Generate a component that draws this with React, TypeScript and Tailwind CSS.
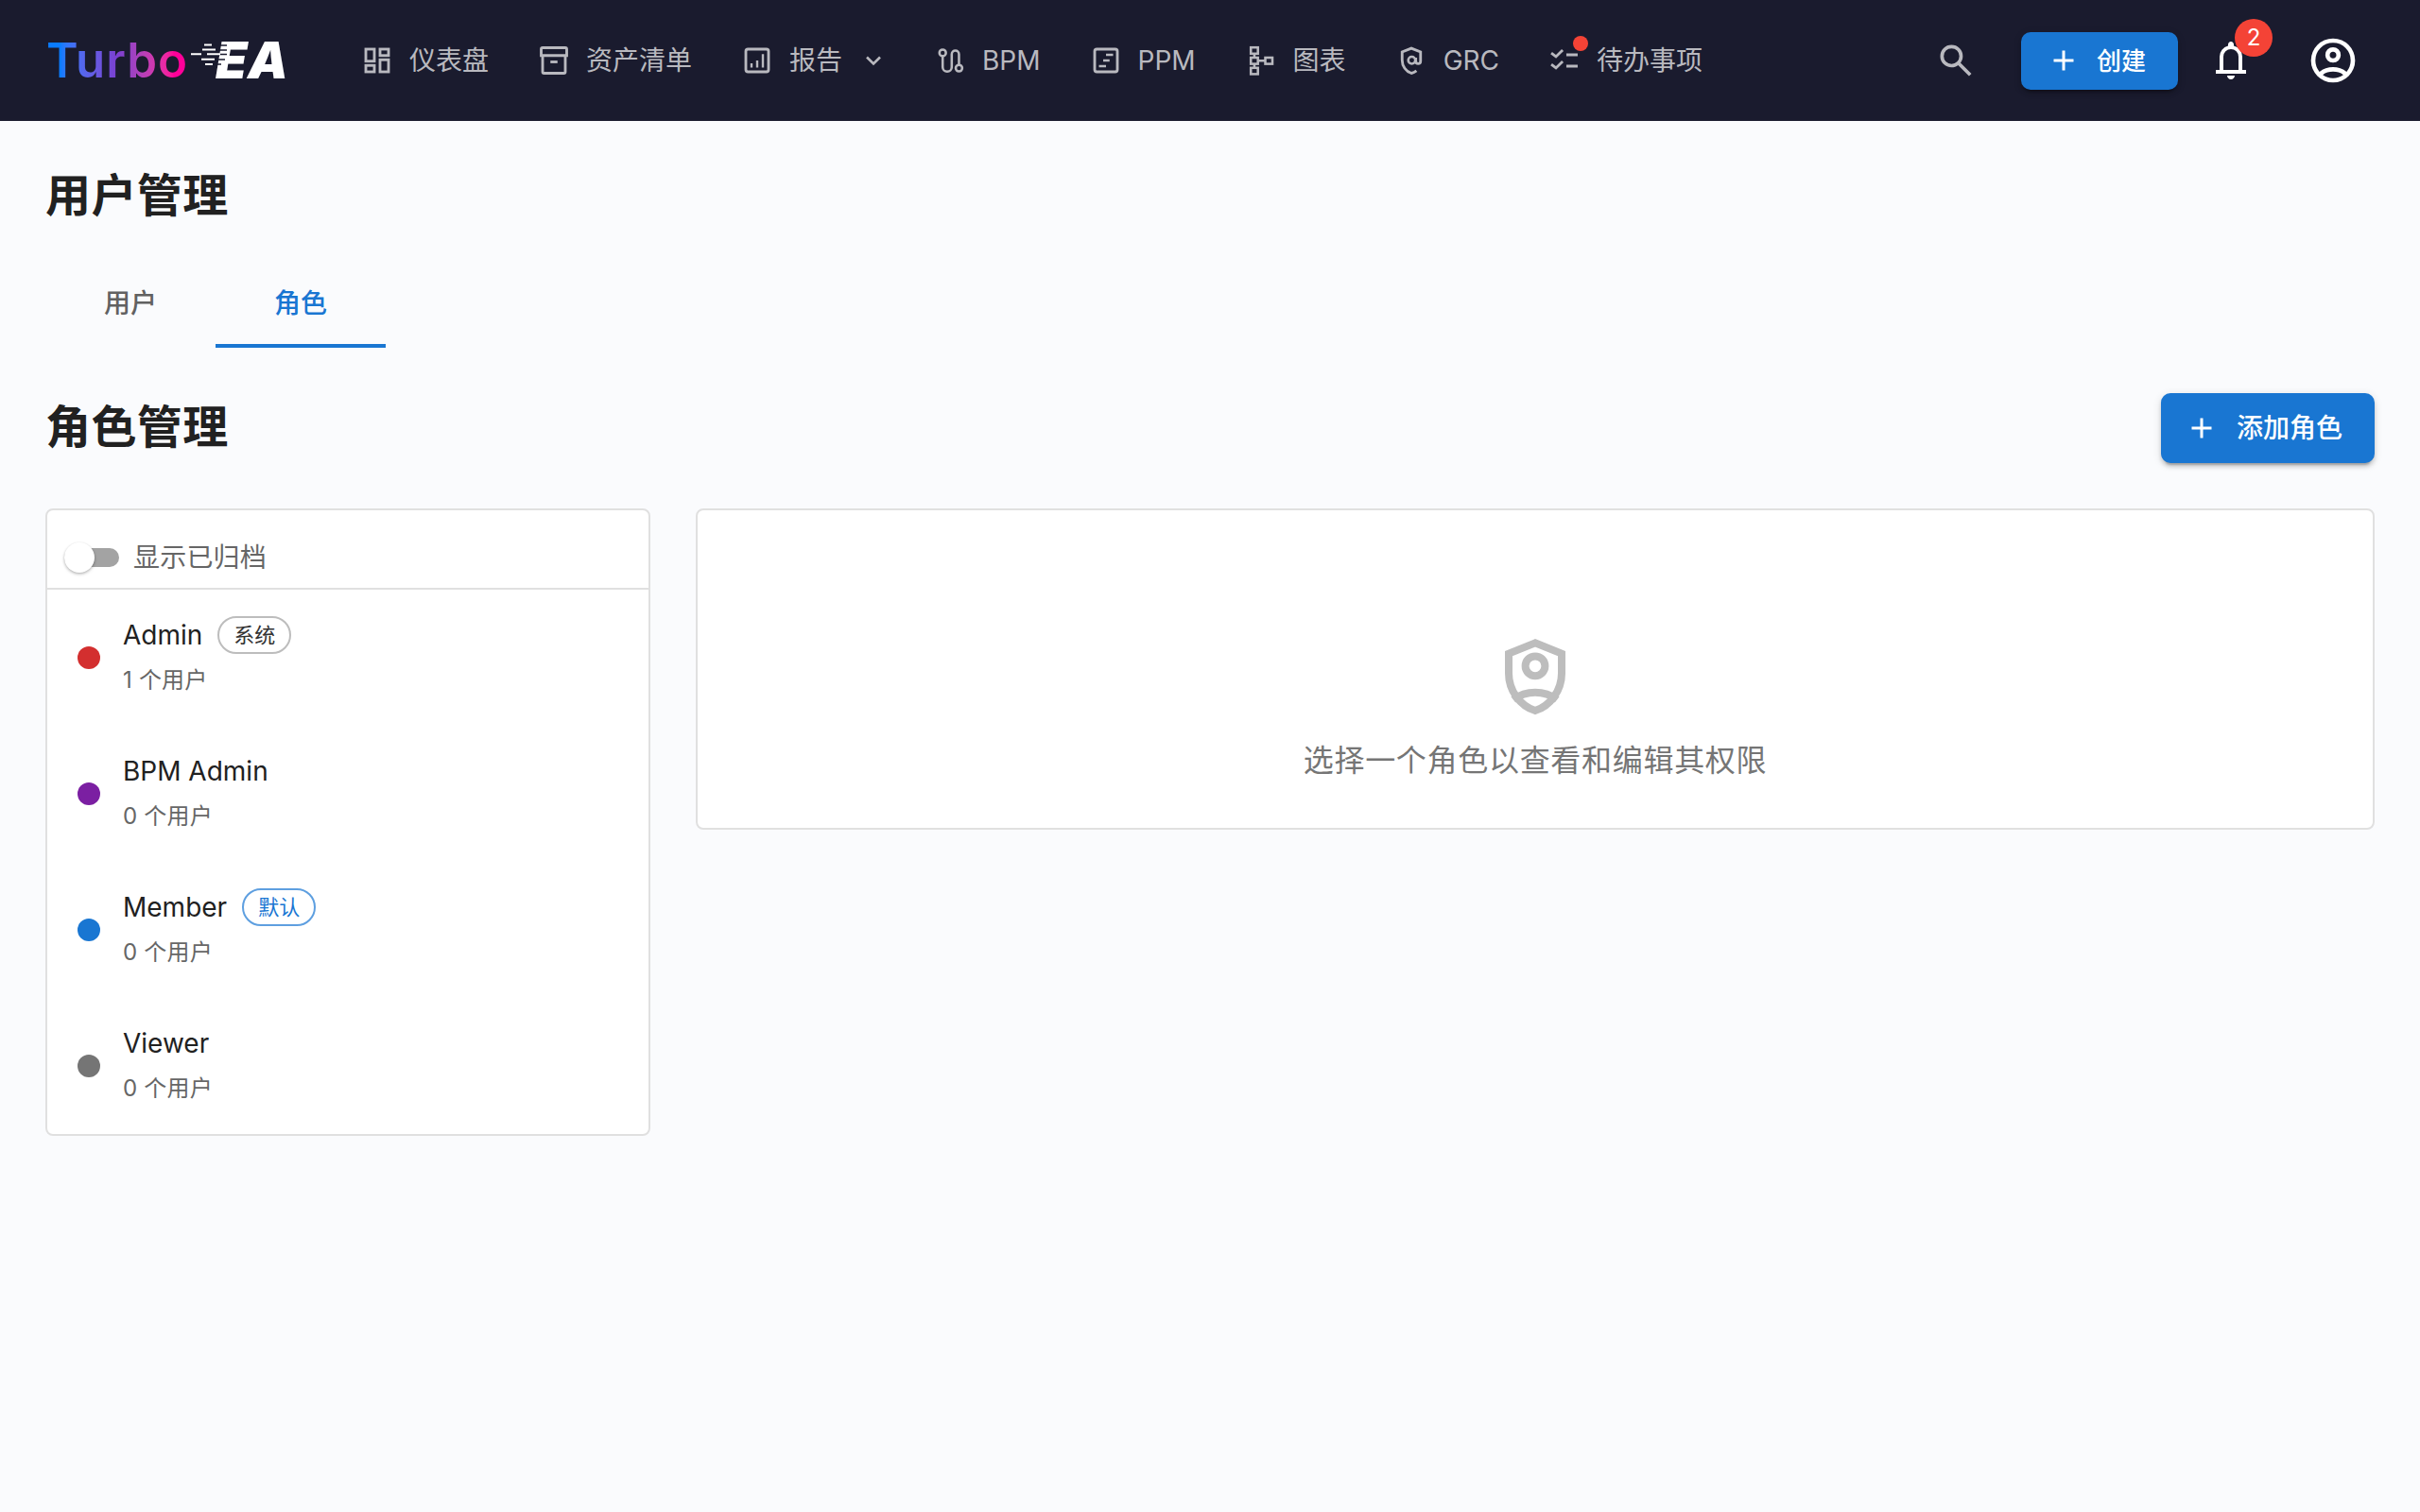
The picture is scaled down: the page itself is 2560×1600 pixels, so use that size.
import type { ReactNode } from "react";

const Icon = ({ children, className = "w-[36px] h-[36px]" }: { children: ReactNode; className?: string }) => (
  <svg viewBox="0 0 24 24" fill="none" stroke="currentColor" strokeWidth={1.9} className={`${className} shrink-0`}>
    {children}
  </svg>
);

const navItems = [
  {
    label: "仪表盘",
    icon: (
      <Icon>
        <rect x="4" y="4" width="6" height="8.5" />
        <rect x="14" y="4" width="6" height="4.5" />
        <rect x="4" y="15.5" width="6" height="4.5" />
        <rect x="14" y="11.5" width="6" height="8.5" />
      </Icon>
    ),
  },
  {
    label: "资产清单",
    icon: (
      <Icon>
        <path d="M4 3h16a1 1 0 0 1 1 1v4.5H3V4a1 1 0 0 1 1-1z" />
        <path d="M4 8.5V20a1 1 0 0 0 1 1h14a1 1 0 0 0 1-1V8.5" />
        <path d="M9.5 13h5" />
      </Icon>
    ),
  },
  {
    label: "报告",
    chevron: true,
    icon: (
      <Icon>
        <rect x="4" y="4" width="16" height="16" rx="1.5" />
        <path d="M8 14v3M12 12v5M16 7.5V17" strokeWidth={1.6} />
      </Icon>
    ),
  },
  {
    label: "BPM",
    icon: (
      <Icon>
        <circle cx="6.8" cy="6.6" r="2.3" strokeWidth={1.7} />
        <circle cx="18.3" cy="17.4" r="2.3" strokeWidth={1.7} />
        <path d="M6.8 9v7.6a3.2 3.2 0 0 0 6.4 0v-9a2.55 2.55 0 0 1 5.1 0V15" strokeWidth={1.7} />
      </Icon>
    ),
  },
  {
    label: "PPM",
    icon: (
      <Icon>
        <rect x="4" y="4" width="16" height="16" rx="1.5" />
        <path d="M12 8h5M10 12h4.5M7 16h5" strokeWidth={1.7} />
      </Icon>
    ),
  },
  {
    label: "图表",
    icon: (
      <Icon>
        <g strokeWidth={1.7}>
          <rect x="4.8" y="2.8" width="5" height="4.4" />
          <rect x="4.8" y="10" width="5" height="4.4" />
          <rect x="4.8" y="17.2" width="5" height="4.4" />
          <rect x="15" y="10" width="5" height="4.4" />
          <path d="M7.3 7.2V10M7.3 14.4v2.8M9.8 12.2H15" />
        </g>
      </Icon>
    ),
  },
  {
    label: "GRC",
    icon: (
      <Icon>
        <path d="M15.6 19.3A8 8 0 0 1 12 21c-3.8-1.2-6.5-5-6.5-9.4V6L12 3.4 18.5 6v6.3c0 2.6-3.4 2.6-3.4 0V10" />
        <circle cx="12.3" cy="11.8" r="2.5" strokeWidth={1.7} />
      </Icon>
    ),
  },
  {
    label: "待办事项",
    dot: true,
    icon: (
      <Icon>
        <path d="M2.7 6.7 6 9.3l4.7-4.6M2.7 14.7 6 17.3l4.7-4.6" />
        <path d="M13.3 8h8M13.3 16h8" />
      </Icon>
    ),
  },
];

const roles = [
  { name: "Admin", color: "bg-[#d32f2f]", users: "1 个用户", chip: "系统", chipClass: "border-[#bdbdbd] text-[#333333]" },
  { name: "BPM Admin", color: "bg-[#7b1fa2]", users: "0 个用户" },
  { name: "Member", color: "bg-[#1976d2]", users: "0 个用户", chip: "默认", chipClass: "border-[#5e9fe0] text-[#1976d2]" },
  { name: "Viewer", color: "bg-[#757575]", users: "0 个用户" },
];

const PlusIcon = () => (
  <svg viewBox="0 0 24 24" fill="currentColor" className="w-[36px] h-[36px] shrink-0">
    <path d="M19 13h-6v6h-2v-6H5v-2h6V5h2v6h6v2z" />
  </svg>
);

function Logo() {
  return (
    <div className="relative w-[333px] shrink-0 h-[60px] flex items-center">
      <span className="ml-[1px] text-[51px] leading-[60px] font-semibold tracking-[1px] bg-gradient-to-r from-[#0a7cff] from-10% via-[#7a3fd0] via-50% to-[#ff0099] to-90% bg-clip-text text-transparent">
        Turbo
      </span>
      <span className="absolute left-[180px] top-[0px] text-[54px] leading-[60px] font-black italic tracking-[0.5px] text-white">
        EA
      </span>
      <svg viewBox="0 0 40 26" className="absolute left-[154px] top-[12px] w-[40px] h-[26px]" fill="none">
        <path d="M12 2h26M12 7h26M20 11.5h18M10 17h26M12 22h20" stroke="#1a1b2e" strokeWidth={1.5} />
        <path d="M14 1.5h8M12 6.5h14M0 11.2h11M17 11.2h14M11 16.8h14M15 22h8" stroke="#ffffff" strokeWidth={2} />
      </svg>
    </div>
  );
}

function Navbar() {
  return (
    <nav className="h-[128px] bg-[#1a1b2e] flex items-center pl-[48px] pr-[64px]">
      <Logo />
      <div className="flex items-center gap-[51px]">
        {navItems.map((item) => (
          <div key={item.label} className="flex items-center gap-[16px] text-[28px] text-[#b9b9bf]">
            <div className="relative">
              {item.icon}
              {item.dot && <span className="absolute left-[27px] top-[-8px] w-[16px] h-[16px] rounded-full bg-[#f44336]" />}
            </div>
            <span className="leading-[40px] whitespace-nowrap">{item.label}</span>
            {item.chevron && (
              <svg viewBox="0 0 30 30" fill="none" stroke="currentColor" strokeWidth={2.6} className="w-[30px] h-[30px] ml-[2px] -mr-[3px]">
                <path d="M8 11.5l7 7 7-7" />
              </svg>
            )}
          </div>
        ))}
      </div>
      <div className="ml-auto flex items-center">
        <svg viewBox="0 -960 960 960" fill="currentColor" className="w-[44px] h-[44px] text-[#b9b9bf]">
          <path d="M784-120 532-372q-30 24-69 38t-83 14q-109 0-184.5-75.5T120-580q0-109 75.5-184.5T380-840q109 0 184.5 75.5T640-580q0 44-14 83t-38 69l252 252-56 56ZM380-400q75 0 127.5-52.5T560-580q0-75-52.5-127.5T380-760q-75 0-127.5 52.5T200-580q0 75 52.5 127.5T380-400Z" />
        </svg>
        <button className="ml-[47px] h-[61px] pl-[27px] pr-[34px] flex items-center gap-[17px] bg-[#1976d2] text-white text-[26px] font-medium rounded-[10px] shadow-[0_6px_2px_-4px_rgba(0,0,0,0.2),0_4px_4px_0_rgba(0,0,0,0.14),0_2px_10px_0_rgba(0,0,0,0.12)]">
          <PlusIcon />
          创建
        </button>
        <div className="relative ml-[32px] w-[48px] h-[48px] text-white">
          <svg viewBox="0 -960 960 960" fill="currentColor" className="w-[48px] h-[48px]">
            <path d="M160-200v-80h80v-280q0-83 50-147.5T420-792v-28q0-25 17.5-42.5T480-880q25 0 42.5 17.5T540-820v28q80 20 130 84.5T720-560v280h80v80H160Zm320-300Zm0 420q-33 0-56.5-23.5T400-160h160q0 33-23.5 56.5T480-80ZM320-280h320v-280q0-66-47-113t-113-47q-66 0-113 47t-47 113v280Z" />
          </svg>
          <span className="absolute left-[28px] top-[-20px] w-[40px] h-[40px] rounded-full bg-[#f44336] flex items-center justify-center text-[24px] text-white">
            2
          </span>
        </div>
        <svg viewBox="0 -960 960 960" fill="currentColor" className="ml-[56px] w-[56px] h-[56px] text-white">
          <path d="M234-276q51-39 114-61.5T480-360q69 0 132 22.5T726-276q35-41 54.5-93T800-480q0-133-93.5-226.5T480-800q-133 0-226.5 93.5T160-480q0 59 19.5 111t54.5 93Zm246-164q-59 0-99.5-40.5T340-580q0-59 40.5-99.5T480-720q59 0 99.5 40.5T620-580q0 59-40.5 99.5T480-440Zm0 360q-83 0-156-31.5T197-197q-54-54-85.5-127T80-480q0-83 31.5-156T197-763q54-54 127-85.5T480-880q83 0 156 31.5T763-763q54 54 85.5 127T880-480q0 83-31.5 156T763-197q-54 54-127 85.5T480-80Zm0-80q53 0 100-15.5t86-44.5q-39-29-86-44.5T480-280q-53 0-100 15.5T294-220q39 29 86 44.5T480-160Zm0-360q26 0 43-17t17-43q0-26-17-43t-43-17q-26 0-43 17t-17 43q0 26 17 43t43 17Z" />
        </svg>
      </div>
    </nav>
  );
}

function RoleList() {
  return (
    <div className="w-[640px] shrink-0 bg-white border-2 border-[#e0e0e0] rounded-[8px]">
      <div className="pl-[18px] pt-[32px] pb-[14px] flex items-center gap-[15px] border-b-2 border-[#e0e0e0]">
        <div className="relative w-[58px] h-[20px] rounded-full bg-[#a3a3a3]">
          <span className="absolute left-0 top-[-6px] w-[32px] h-[32px] rounded-full bg-white shadow-[0_2px_4px_-1px_rgba(0,0,0,0.2),0_1px_3px_0_rgba(0,0,0,0.2)]" />
        </div>
        <span className="text-[28px] leading-[36px] tracking-[0.2px] text-[#666666]">显示已归档</span>
      </div>
      {roles.map((role) => (
        <div key={role.name} className="h-[144px] pl-[32px] flex items-center gap-[24px]">
          <span className={`w-[24px] h-[24px] rounded-full ${role.color}`} />
          <div className="pb-[3px]">
            <div className="h-[40px] flex items-center gap-[16px]">
              <span className="text-[28px] text-[#212121]">{role.name}</span>
              {role.chip && (
                <span className={`h-[40px] w-[78px] flex items-center justify-center rounded-full border-2 text-[22px] ${role.chipClass}`}>
                  {role.chip}
                </span>
              )}
            </div>
            <div className="mt-[11px] h-[34px] text-[24px] leading-[34px] tracking-[0.2px] text-[#666666]">{role.users}</div>
          </div>
        </div>
      ))}
    </div>
  );
}

function EmptyPanel() {
  return (
    <div className="flex-1 bg-white border-2 border-[#e0e0e0] rounded-[8px] pt-[128px] pb-[47px] flex flex-col items-center">
      <svg viewBox="0 0 24 24" fill="none" stroke="#bdbdbd" strokeWidth={2} className="w-[96px] h-[96px]">
        <path d="M12 3.1 5 5.9v5.2c0 4.5 3 8.7 7 9.9 4-1.2 7-5.4 7-9.9V5.9z" />
        <circle cx="12" cy="9.2" r="2.6" />
        <path d="M6.2 18.1c1.6-1.2 3.6-1.9 5.8-1.9s4.2.7 5.8 1.9" />
      </svg>
      <p className="mt-[17px] text-[32px] leading-[48px] tracking-[0.7px] text-[#757575]">选择一个角色以查看和编辑其权限</p>
    </div>
  );
}

export default function App() {
  return (
    <div className="min-h-screen bg-[#fafbfd] [font-family:Inter,'Noto_Sans_CJK_SC',sans-serif]">
      <Navbar />
      <main className="px-[48px] pt-[48px]">
        <h1 className="text-[48px] leading-[62px] font-bold tracking-[0.4px] text-[#212121]">用户管理</h1>
        <div className="mt-[34px] flex">
          <div className="w-[180px] h-[96px] pt-[2px] flex items-center justify-center text-[28px] font-medium text-[#616161]">用户</div>
          <div className="relative w-[180px] h-[96px] pt-[2px] flex items-center justify-center text-[28px] font-medium text-[#1976d2]">
            角色
            <span className="absolute left-0 right-0 bottom-0 h-[4px] bg-[#1976d2]" />
          </div>
        </div>
        <div className="mt-[48px] flex items-center justify-between">
          <h2 className="pb-[3px] text-[48px] leading-[62px] font-bold tracking-[0.4px] text-[#212121]">角色管理</h2>
          <button className="h-[74px] w-[226px] pl-[25px] flex items-center gap-[19px] bg-[#1976d2] text-white text-[28px] font-medium rounded-[10px] shadow-[0_6px_2px_-4px_rgba(0,0,0,0.2),0_4px_4px_0_rgba(0,0,0,0.14),0_2px_10px_0_rgba(0,0,0,0.12)]">
            <PlusIcon />
            添加角色
          </button>
        </div>
        <div className="mt-[48px] flex items-start gap-[48px]">
          <RoleList />
          <EmptyPanel />
        </div>
      </main>
    </div>
  );
}
